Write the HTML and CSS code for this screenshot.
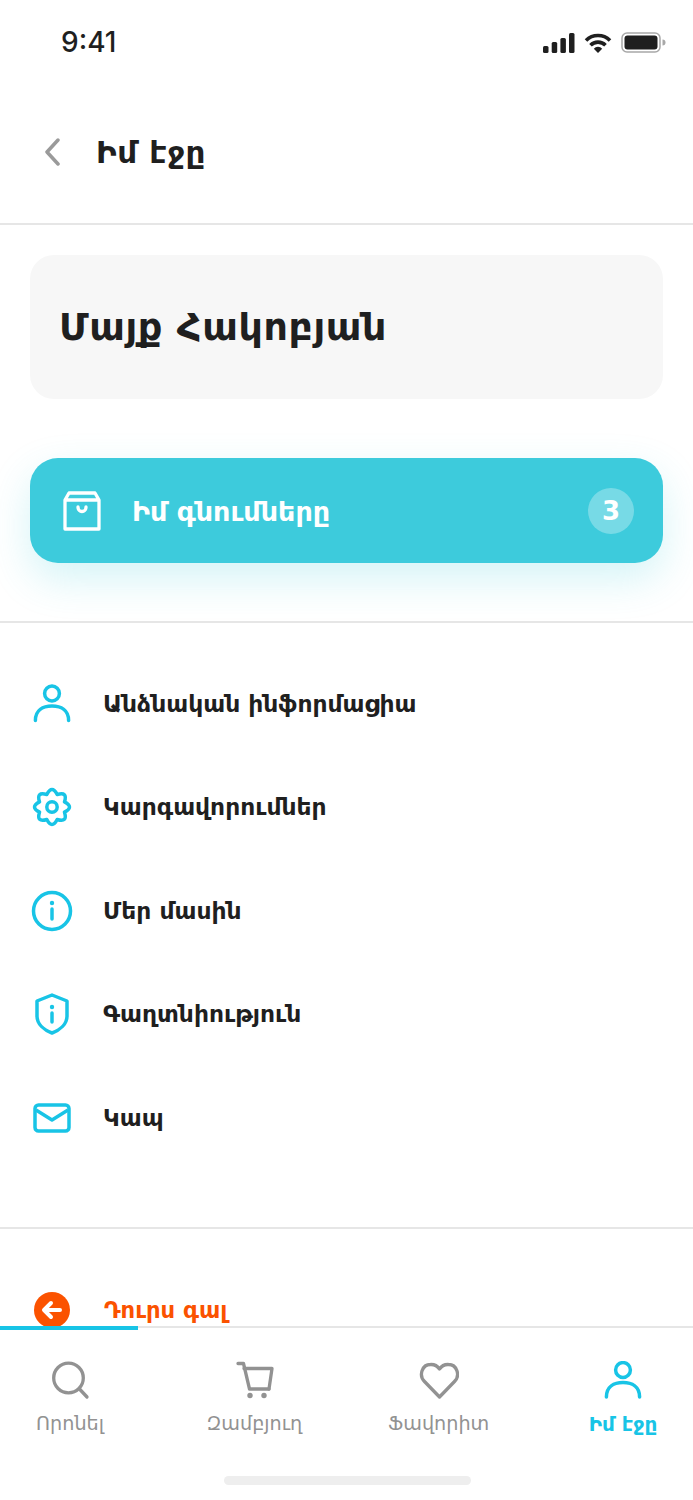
FILE: index.html
```html
<!DOCTYPE html>
<html lang="hy">
<head>
<meta charset="UTF-8">
<meta name="viewport" content="width=device-width, initial-scale=1.0">
<title>Իմ էջը</title>
<link rel="stylesheet" href="styles.css">
</head>
<body>
<div id="app">
    <div class="status-bar">
        <span class="time">9:41</span>
        <div class="status-icons">
            <svg width="32" height="20" viewBox="0 0 32 20"><g fill="#1f1f1f"><rect x="0" y="13" width="5.500" height="7" rx="1.500"/><rect x="8.700" y="9" width="5.500" height="11" rx="1.500"/><rect x="17.400" y="5" width="5.500" height="15" rx="1.500"/><rect x="26" y="0" width="5.500" height="20" rx="1.500"/></g></svg>
            <svg width="28" height="20" viewBox="0 0 28 20"><path d="M2 7.500a17 17 0 0 1 24 0M6.500 12.300a10.500 10.500 0 0 1 15 0" fill="none" stroke="#1f1f1f" stroke-width="3.600"/><path d="M9.800 15.700a5.500 5.500 0 0 1 8.400 0L14 20z" fill="#1f1f1f"/></svg>
            <svg width="45" height="21" viewBox="0 0 45 21"><rect x="1" y="1" width="38" height="19" rx="5" fill="none" stroke="#a8a8a8" stroke-width="1.500"/><rect x="3.500" y="3.500" width="33" height="14" rx="3" fill="#1f1f1f"/><path d="M41.500 7.500a3 3 0 0 1 0 6z" fill="#a8a8a8"/></svg>
        </div>
    </div>
    <header class="top-bar">
        <svg class="back" width="16" height="28" viewBox="0 0 16 28"><path d="M14 2 3 14l11 12" fill="none" stroke="#9a9a9a" stroke-width="3.500" stroke-linecap="round" stroke-linejoin="round"/></svg>
        <h1>Իմ էջը</h1>
    </header>
    <main>
        <section class="account">
            <div class="name-card">Մայք Հակոբյան</div>
            <div class="orders-btn">
                <svg width="40" height="40" viewBox="0 0 40 40"><path d="M7 2h26l4 7v29H3V9zM3 9h34M16 16c0 6 8 6 8 0" fill="none" stroke="#fff" stroke-width="3.300" stroke-linejoin="round" stroke-linecap="round"/></svg>
                <span class="orders-label">Իմ գնումները</span>
                <span class="count">3</span>
            </div>
        </section>
        <nav class="menu">
            <div class="menu-item">
                <span class="menu-icon"><svg width="40" height="40" viewBox="0 0 40 40"><g fill="none" stroke="#18c4e6" stroke-width="3.500" stroke-linecap="round"><circle cx="20" cy="9.500" r="7.400"/><path d="M3.400 36.500C3.400 26 11 22 20 22s16.600 4 16.600 14.500"/></g></svg></span>
                <span>Անձնական ինֆորմացիա</span>
            </div>
            <div class="menu-item">
                <span class="menu-icon"><svg width="40" height="40" viewBox="0 0 40 40"><g fill="none" stroke="#18c4e6" stroke-width="3.500" stroke-linejoin="round"><circle cx="20" cy="20" r="5.200"/><path d="M25.170 7.530Q35.900 4.100 32.470 14.830 42.500 20 32.470 25.170 35.900 35.900 25.170 32.470 20 42.500 14.830 32.470 4.100 35.900 7.530 25.170-2.500 20 7.530 14.830 4.100 4.100 14.830 7.530 20-2.500 25.170 7.530z"/></g></svg></span>
                <span>Կարգավորումներ</span>
            </div>
            <div class="menu-item">
                <span class="menu-icon"><svg width="42" height="42" viewBox="0 0 42 42"><circle cx="21" cy="21" r="18.500" fill="none" stroke="#18c4e6" stroke-width="3.500"/><circle cx="21" cy="13" r="2.200" fill="#18c4e6"/><path d="M21 19v10" stroke="#18c4e6" stroke-width="3.500" stroke-linecap="round"/></svg></span>
                <span>Մեր մասին</span>
            </div>
            <div class="menu-item">
                <span class="menu-icon"><svg width="34" height="42" viewBox="0 0 34 42"><path d="M17 2 32 8v15c0 8-7 14-15 17C9 37 2 31 2 23V8z" fill="none" stroke="#18c4e6" stroke-width="3.500" stroke-linejoin="round"/><circle cx="17" cy="14" r="2.200" fill="#18c4e6"/><path d="M17 20v9" stroke="#18c4e6" stroke-width="3.500" stroke-linecap="round"/></svg></span>
                <span>Գաղտնիություն</span>
            </div>
            <div class="menu-item">
                <span class="menu-icon"><svg width="38" height="30" viewBox="0 0 38 30"><rect x="2" y="2" width="34" height="26" rx="3.500" fill="none" stroke="#18c4e6" stroke-width="3.500"/><path d="m3 7 16 10L35 7" fill="none" stroke="#18c4e6" stroke-width="3.500" stroke-linejoin="round"/></svg></span>
                <span>Կապ</span>
            </div>
        </nav>
        <div class="logout">
            <span class="menu-icon"><svg width="36" height="36" viewBox="0 0 36 36"><circle cx="18" cy="18" r="18" fill="#fb5200"/><path d="M26 18H11M17 11l-7 7 7 7" fill="none" stroke="#fff" stroke-width="4" stroke-linecap="round" stroke-linejoin="round"/></svg></span>
            <span>Դուրս գալ</span>
        </div>
    </main>
    <footer class="tab-bar">
        <div class="tab-progress"></div>
        <div class="tabs">
            <div class="tab">
                <svg width="40" height="40" viewBox="0 0 40 40"><g fill="none" stroke="#929292" stroke-width="3.300" stroke-linecap="round"><circle cx="18.500" cy="17" r="14.800"/><path d="m29.500 28 7.500 8"/></g></svg>
                <span>Որոնել</span>
            </div>
            <div class="tab">
                <svg width="40" height="40" viewBox="0 0 40 40"><g fill="none" stroke="#929292" stroke-width="3.300" stroke-linecap="round" stroke-linejoin="round"><path d="M4 2.500h5.500L15.500 28h19.500"/><path d="M10 7.500h28L35 28"/></g><circle cx="16" cy="34.500" r="2.700" fill="#929292"/><circle cx="30" cy="34.500" r="2.700" fill="#929292"/></svg>
                <span>Զամբյուղ</span>
            </div>
            <div class="tab">
                <svg width="40" height="40" viewBox="0 0 40 40"><path d="M20.500 36 5.500 20.500C-.5 14.500 3 3.500 11.500 3.500c4-.2 7 1.500 9 4.500 2-3 5-4.700 9-4.500 8.500 0 12 11 6 17z" fill="none" stroke="#929292" stroke-width="3.300" stroke-linejoin="round"/></svg>
                <span>Ֆավորիտ</span>
            </div>
            <div class="tab active">
                <svg width="40" height="40" viewBox="0 0 40 40"><g fill="none" stroke="#18c4e6" stroke-width="3.500" stroke-linecap="round"><circle cx="20" cy="9" r="7.400"/><path d="M3.400 36C3.400 25.500 11 21.500 20 21.500S36.600 25.500 36.600 36"/></g></svg>
                <span>Իմ էջը</span>
            </div>
        </div>
        <div class="home-indicator"></div>
    </footer>
</div>
</body>
</html>
```
FILE: styles.css
```css
body {
    font-family: 'DejaVu Sans', sans-serif;
    background-color: white;
    color: #1f1f1f;
    margin: 0;
    padding: 0;
}
#app {
    width: 693px;
    height: 1500px;
    display: flex;
    flex-direction: column;
    overflow: hidden;
}
.status-bar {
    height: 84px;
    box-sizing: border-box;
    padding: 26px 27px 0 61px;
    display: flex;
    justify-content: space-between;
    align-items: flex-start;
}
.time {
    font-family: 'Inter', sans-serif;
    font-size: 28px;
    font-weight: 500;
    line-height: 32px;
}
.status-icons {
    display: flex;
    align-items: center;
    gap: 9px;
    padding-top: 6px;
}
.top-bar {
    height: 141px;
    box-sizing: border-box;
    border-bottom: 2px solid #e6e6e6;
    padding: 0 0 4px 44px;
    display: flex;
    align-items: center;
    gap: 36px;
}
.top-bar h1 {
    margin: 0;
    font-size: 31px;
    letter-spacing: 0.6px;
    font-weight: 700;
}
main {
    flex: 1;
    min-height: 0;
    overflow: hidden;
}
.account {
    padding: 30px 30px 58px;
    border-bottom: 2px solid #e6e6e6;
}
.name-card {
    height: 144px;
    box-sizing: border-box;
    padding-left: 29px;
    display: flex;
    align-items: center;
    background-color: #f7f7f7;
    border-radius: 24px;
    font-size: 38px;
    letter-spacing: 0.6px;
    font-weight: 700;
    margin-bottom: 59px;
}
.orders-btn {
    height: 105px;
    box-sizing: border-box;
    padding: 0 29px 0 32px;
    display: flex;
    align-items: center;
    background-color: #3dcbdc;
    border-radius: 28px;
    box-shadow: 0 16px 40px rgba(61, 203, 220, 0.22);
    color: white;
}
.orders-label {
    flex-grow: 1;
    margin-left: 30px;
    padding-top: 2px;
    font-size: 27px;
    font-weight: 700;
}
.count {
    width: 46px;
    height: 46px;
    border-radius: 50%;
    background-color: rgba(255, 255, 255, 0.3);
    display: flex;
    align-items: center;
    justify-content: center;
    font-size: 26px;
    font-weight: 700;
}
.menu {
    padding: 29px 0 57px;
    border-bottom: 2px solid #e6e6e6;
}
.menu-item {
    height: 103.5px;
    display: flex;
    align-items: center;
    font-size: 23.4px;
    font-weight: 700;
}
.menu-icon {
    width: 103px;
    flex-shrink: 0;
    display: flex;
    justify-content: center;
}
.logout {
    display: flex;
    align-items: center;
    margin-top: 63px;
    height: 36px;
    color: #fb5200;
    font-size: 22.7px;
    font-weight: 700;
}
.logout span:last-child {
    padding-left: 1px;
}
.tab-bar {
    position: relative;
    height: 174px;
    box-sizing: border-box;
    border-top: 2px solid #e6e6e6;
    padding-top: 33px;
}
.tab-progress {
    position: absolute;
    left: 0;
    top: -2px;
    width: 138px;
    height: 4px;
    background-color: #18c4e6;
}
.tabs {
    display: flex;
    justify-content: space-between;
}
.tab {
    width: 140px;
    display: flex;
    flex-direction: column;
    align-items: center;
    gap: 11px;
    color: #929292;
    font-size: 19.2px;
    font-weight: 400;
}
.tab.active {
    color: #18c4e6;
    font-size: 20px;
    font-weight: 700;
}
.home-indicator {
    width: 247px;
    height: 9px;
    margin: 40px 0 0 224px;
    background-color: #eeeeee;
    border-radius: 5px;
}
```
